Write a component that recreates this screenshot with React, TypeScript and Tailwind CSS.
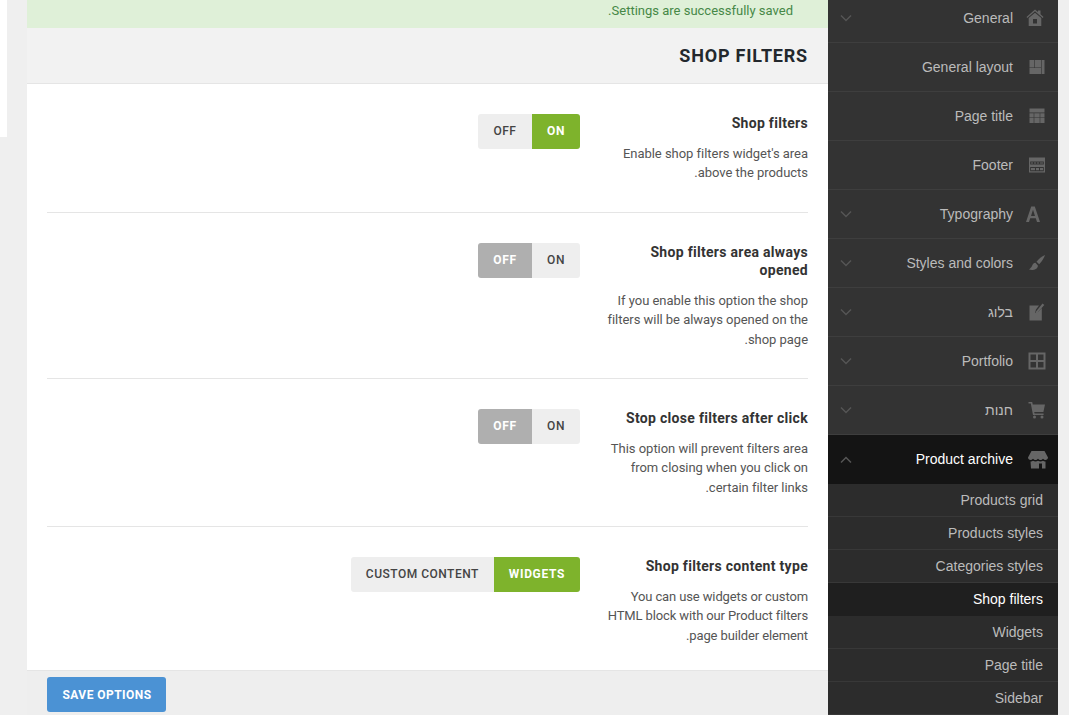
import React from "react";

const sans = "font-['Liberation_Sans',Arial,sans-serif]";
const rob = "font-['Roboto',sans-serif]";

type IconName = "home" | "layout" | "title" | "footer" | "font" | "brush" | "edit" | "grid" | "cart" | "store";

function Icon({ name }: { name: IconName }) {
  const p = { width: 18, height: 18, viewBox: "0 0 18 18", fill: "#666" };
  switch (name) {
    case "home":
      return <svg {...p} className="-translate-x-[2px]"><path d="M9 .5 12 3V1.500h2.500v3.700L17.500 8l-.8.9L9 2.300 1.300 8.900.5 8z" /><path fillRule="evenodd" d="M9 3.700 15.300 9v8H2.700V9zM7 10v4.500h4V10z" /></svg>;
    case "layout":
      return <svg {...p}><path d="M1.500 2h4.700v7.500H1.500zM6.800 2h6.200v7.500H6.800zM1.500 10h11.500v6H1.500zM13.600 2h2.900v14h-2.900z" /></svg>;
    case "title":
      return <svg {...p}><path d="M1.500 1.500h15v4h-15zM1.500 6.200h4.200v3.800H1.500zM6.300 6.200h5.400v3.800H6.300zM12.300 6.200h4.200v3.800h-4.200zM1.500 10.600h4.200v5.400H1.500zM6.300 10.600h5.400v5.400H6.300zM12.300 10.600h4.200v5.400h-4.200z" /></svg>;
    case "footer":
      return <svg {...p}><path fillRule="evenodd" d="M1 1.500h16v15H1zM2.200 5.600v2.800h13.600V5.600zM2.200 11v4.200h13.600V11z" /><path d="M3 6.400h2v1.200H3zM6 6.400h2v1.200H6zM9 6.400h2v1.200H9zM12 6.400h3v1.200h-3zM3 12h4v2.200H3zM8 12h3v2.200H8zM12 12h3v2.200h-3z" /></svg>;
    case "font":
      return <svg {...p} className="-translate-x-[4px]"><path fillRule="evenodd" d="M7.200 1.500h3.600L16 17h-3l-1.200-3.800H6.200L5 17H2zM9 4.800 7 11h4z" /></svg>;
    case "brush":
      return <svg {...p}><path d="M17 1c-3 1.300-6.500 4-8.500 6.800l2.700 2.400C13.500 8 16 4.500 17 1z" /><path d="M7.500 8.700C5.500 8.700 4.700 10.300 4 12c-.5 1.300-1.800 2.300-3 3.500 3.500 1 8.300.3 9-3.800z" /></svg>;
    case "edit":
      return <svg {...p}><path d="M1.500 2.500H11L8 6.500 7 10l3.200-1.300L13.800 5v12.500H1.500z" /><path d="M14.500 .5l1.800 1.500-7 7.800-1.700.6.400-1.800z" /></svg>;
    case "grid":
      return <svg {...p}><path fillRule="evenodd" d="M.5.500h17v17H.500zM2.500 2.500v5.500h5.500V2.500zM10 2.500v5.500h5.500V2.500zM2.500 10v5.500h5.500V10zM10 10v5.500h5.500V10z" /></svg>;
    case "cart":
      return <svg {...p}><path d="M.5 1h3.700l.6 2.500H17l-1.600 7.500H6.200l.4 1.500h9v1.500H5L2.800 2.500H.5z" /><circle cx="6.500" cy="16" r="1.500" /><circle cx="14" cy="16" r="1.500" /></svg>;
    case "store":
      return <svg width="20" height="18" viewBox="0 0 20 18" fill="#666"><path d="M3.500 0h13L20 6.500c0 1.500-1.300 2.500-2.500 2.500-.9 0-1.700-.5-2.500-1.300C14.300 8.500 13.300 9 12.500 9s-1.800-.5-2.500-1.300C9.300 8.500 8.300 9 7.500 9s-1.800-.5-2.500-1.300C4.200 8.500 3.400 9 2.500 9 1.300 9 0 8 0 6.500z" /><path d="M2.500 10.500c1 0 2-.3 2.500-.8.800.6 1.700.8 2.500.8s1.800-.2 2.500-.8c.7.6 1.700.8 2.500.8s1.700-.2 2.500-.8c.5.5 1.500.8 2.500.8V17.500h-3.500v-5h-3v5h-8z" /></svg>;
  }
}

function Chevron({ up }: { up?: boolean }) {
  return (
    <svg width="12" height="8" viewBox="0 0 12 8" fill="none" stroke="#555" strokeWidth="1.500" className="absolute left-[12px] top-1/2 -translate-y-1/2">
      <path d={up ? "M1 6.500 6 1.500l5 5" : "M1 1.500l5 5 5-5"} />
    </svg>
  );
}

const menu: { label: string; icon: IconName; chevron?: boolean }[] = [
  { label: "General", icon: "home", chevron: true },
  { label: "General layout", icon: "layout" },
  { label: "Page title", icon: "title" },
  { label: "Footer", icon: "footer" },
  { label: "Typography", icon: "font", chevron: true },
  { label: "Styles and colors", icon: "brush", chevron: true },
  { label: "בלוג", icon: "edit", chevron: true },
  { label: "Portfolio", icon: "grid", chevron: true },
  { label: "חנות", icon: "cart", chevron: true },
];

const sub = ["Products grid", "Products styles", "Categories styles", "Shop filters", "Widgets", "Page title", "Sidebar"];

function Toggle({ off, on, active }: { off: string; on: string; active: "on" | "off" }) {
  const base = `flex h-[35px] items-center justify-center pb-[1px] text-[12px] ${rob}`;
  const activeOn = "font-bold tracking-[0.65px] text-white";
  const idle = "font-medium tracking-[0.5px] text-[#444] bg-[#eeeeee]";
  return (
    <div dir="ltr" className="flex h-[35px] w-fit overflow-hidden rounded-[3px]">
      <div className={`${base} min-w-[54px] px-[15px] ${active === "off" ? `bg-[#afafaf] ${activeOn}` : idle}`}>{off}</div>
      <div className={`${base} min-w-[48px] px-[15px] ${active === "on" ? `bg-[#7eb32c] ${activeOn}` : idle}`}>{on}</div>
    </div>
  );
}

function Row({ title, desc, children, h, last }: { title: string; desc: string; children: React.ReactNode; h: string; last?: boolean }) {
  return (
    <div className={`mx-[20px] flex items-start gap-[25px] pt-[30px] ${h} ${last ? "" : "border-b border-[#e5e5e5]"}`}>
      <div className={`w-[203px] shrink-0 ${rob}`}>
        <div className="text-[14px] font-bold leading-[18px] tracking-[0.3px] text-[#333]">{title}</div>
        <p className={`mt-[11.600px] text-[13px] leading-[19.500px] text-[#555] ${last ? "tracking-[-0.12px]" : "tracking-[-0.03px]"}`}>{desc}</p>
      </div>
      {children}
    </div>
  );
}

export default function App() {
  return (
    <div dir="rtl" className="relative flex h-[715px] w-[1069px] overflow-hidden bg-[#efefef]">
      <div className="mr-[11px] w-[230px] shrink-0 overflow-hidden bg-[#333]">
        <div className="-mt-[6px]">
          {menu.map((m) => (
            <div key={m.label} className={`relative flex h-[49px] items-center border-b border-[#3e3e3e] ${sans} text-[14px] text-[#bbb]`}>
              <span className="flex w-[40px] shrink-0 justify-center pr-[3px]"><Icon name={m.icon} /></span>
              <span className="pr-[5px]">{m.label}</span>
              {m.chevron && <Chevron />}
            </div>
          ))}
          <div className={`relative flex h-[49px] items-center bg-[#141414] ${sans} text-[14px] text-white`}>
            <span className="flex w-[40px] shrink-0 justify-center pr-[1px]"><Icon name="store" /></span>
            <span className="pr-[5px]">Product archive</span>
            <Chevron up />
          </div>
          <div className="bg-[#2c2c2c]">
            {sub.map((s) => (
              <div key={s} className={`flex h-[33px] items-center border-b pr-[15px] ${sans} text-[14px] ${s === "Shop filters" ? "border-[#1f1f1f] bg-[#1f1f1f] text-white" : "border-[#383838] text-[#bbb]"}`}>
                {s}
              </div>
            ))}
          </div>
        </div>
      </div>

      <div className="flex h-[715px] w-[801px] shrink-0 flex-col bg-white">
        <div className={`flex h-[28px] shrink-0 items-start bg-[#dff0d8] pr-[35px] pt-[3px] ${rob} text-[13px] leading-[16px] text-[#468847]`}>
          Settings are successfully saved.
        </div>
        <div className="flex h-[56px] shrink-0 items-center border-b border-[#e5e5e5] bg-[#f2f2f2] pr-[20px]">
          <h1 className={`${rob} text-[18px] font-bold tracking-[0.8px] text-[#23282d]`}>SHOP FILTERS</h1>
        </div>
        <Row h="h-[129px]" title="Shop filters" desc="Enable shop filters widget's area above the products.">
          <Toggle off="OFF" on="ON" active="on" />
        </Row>
        <Row h="h-[166px]" title="Shop filters area always opened" desc="If you enable this option the shop filters will be always opened on the shop page.">
          <Toggle off="OFF" on="ON" active="off" />
        </Row>
        <Row h="h-[148px]" title="Stop close filters after click" desc="This option will prevent filters area from closing when you click on certain filter links.">
          <Toggle off="OFF" on="ON" active="off" />
        </Row>
        <Row h="h-[143px]" last title="Shop filters content type" desc="You can use widgets or custom HTML block with our Product filters page builder element.">
          <Toggle off="CUSTOM CONTENT" on="WIDGETS" active="on" />
        </Row>
        <div dir="ltr" className="flex flex-1 items-start border-t border-[#e5e5e5] bg-[#eeeeee] pl-[20px] pt-[6px]">
          <button className={`h-[35px] w-[119px] rounded-[3px] bg-[#4b92d4] pl-[1px] text-[12px] font-bold tracking-[0.45px] text-white ${rob}`}>SAVE OPTIONS</button>
        </div>
      </div>

      <div className="flex-1">
        <div className="mr-[20px] h-[137px] w-[7px] bg-white" />
      </div>
    </div>
  );
}
